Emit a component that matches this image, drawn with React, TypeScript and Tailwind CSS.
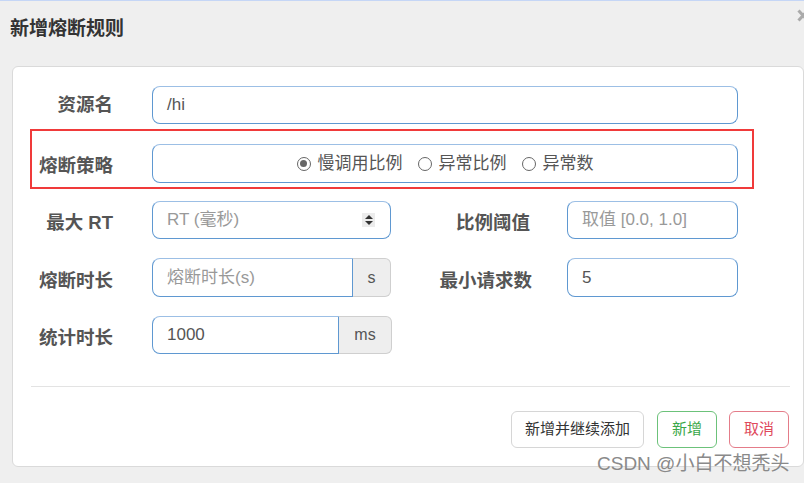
import type { ReactNode } from "react";

const inputBox =
  "flex h-full items-center border border-[#5f98d1] border-t-[#9cbfe5] bg-white px-[14px] text-[17px] text-[#555]";

function Label({ children, className = "w-[81px]" }: { children: ReactNode; className?: string }) {
  return <div className={`${className} shrink-0 text-right text-[18.5px] font-bold text-[#555]`}>{children}</div>;
}

function Radio({ checked, label }: { checked?: boolean; label: string }) {
  return (
    <label className="flex items-center gap-[7px]">
      <span className="flex h-[14px] w-[14px] items-center justify-center rounded-full border-[1.5px] border-[#666]">
        {checked ? <span className="h-[7px] w-[7px] rounded-full bg-[#666]" /> : null}
      </span>
      <span className="text-[17px] text-[#555]">{label}</span>
    </label>
  );
}

function Spinner() {
  return (
    <span className="ml-auto flex h-[14px] w-[13px] flex-col items-center justify-center gap-[2px] bg-[#ececec]">
      <svg width="8" height="4" viewBox="0 0 8 4"><path d="M0 4 L4 0 L8 4 Z" fill="#333" /></svg>
      <svg width="8" height="4" viewBox="0 0 8 4"><path d="M0 0 L8 0 L4 4 Z" fill="#333" /></svg>
    </span>
  );
}

function Addon({ children, width }: { children: ReactNode; width: string }) {
  return (
    <div className={`${width} flex h-full items-center justify-center rounded-r-[6px] border border-l-0 border-[#cfcfcf] bg-[#eee] text-[16px] text-[#555]`}>
      {children}
    </div>
  );
}

export default function App() {
  return (
    <div className="relative h-[483px] w-[804px] overflow-hidden border-t border-[#c5d6f6] bg-[#efefef] font-['Liberation_Sans','Noto_Sans_CJK_SC',sans-serif]">
      <div className="h-[65px] pl-[10px] pt-[16px]">
        <h1 className="text-[19px] font-bold leading-[24px] text-[#333]">新增熔断规则</h1>
      </div>
      {/* close icon, clipped by the window edge */}
      <svg className="absolute left-[797px] top-[8px]" width="12" height="13" viewBox="0 0 12 13">
        <path d="M1.5 1.5 L10.5 11.5 M10.5 1.5 L1.5 11.5" stroke="#aaa" strokeWidth="3" />
      </svg>

      <div className="ml-[12px] w-[792px] rounded-[6px] border border-[#dadada] bg-white pb-[18px] pl-[17px] pt-[19px]">
        {/* 资源名 */}
        <div className="flex h-[38px] w-[724px] items-center px-[2px]">
          <Label>资源名</Label>
          <div className={`${inputBox} ml-[39px] w-[586px] rounded-[8px]`}>/hi</div>
        </div>

        {/* 熔断策略 */}
        <div className="mt-[5px] w-[724px] border-2 border-[#f03a3a] pb-[4px] pt-[13px]">
          <div className="flex h-[39px] items-center">
            <Label className="w-[81px] translate-y-[2px]">熔断策略</Label>
            <div className={`${inputBox} ml-[39px] w-[586px] justify-center gap-[15px] rounded-[8px]`}>
              <Radio checked label="慢调用比例" />
              <Radio label="异常比例" />
              <Radio label="异常数" />
            </div>
          </div>
        </div>

        {/* 最大 RT / 比例阈值 */}
        <div className="mt-[12px] flex h-[38px] w-[724px] items-center px-[2px]">
          <Label className="w-[81px] translate-y-[3px]">最大 RT</Label>
          <div className={`${inputBox} ml-[39px] w-[239px] rounded-[8px] pr-[15px]`}>
            <span className="text-[#999]">RT (毫秒)</span>
            <Spinner />
          </div>
          <Label className="w-[139px] translate-y-[3px]">比例阈值</Label>
          <div className={`${inputBox} ml-[37px] w-[171px] rounded-[8px] text-[#999]`}>取值 [0.0, 1.0]</div>
        </div>

        {/* 熔断时长 / 最小请求数 */}
        <div className="mt-[19px] flex h-[39px] w-[724px] items-center px-[2px]">
          <Label className="w-[81px] translate-y-[3px]">熔断时长</Label>
          <div className="ml-[39px] flex h-full w-[239px]">
            <div className={`${inputBox} w-[201px] rounded-l-[8px] text-[#999]`}>熔断时长(s)</div>
            <Addon width="w-[38px]">s</Addon>
          </div>
          <Label className="w-[141px] translate-y-[3px]">最小请求数</Label>
          <div className={`${inputBox} ml-[35px] w-[171px] rounded-[8px]`}>5</div>
        </div>

        {/* 统计时长 */}
        <div className="mt-[19px] flex h-[38px] w-[724px] items-center px-[2px]">
          <Label className="w-[81px] translate-y-[3px]">统计时长</Label>
          <div className="ml-[39px] flex h-full w-[240px]">
            <div className={`${inputBox} w-[187px] rounded-l-[8px]`}>1000</div>
            <Addon width="w-[53px]">ms</Addon>
          </div>
        </div>

        <div className="ml-[1px] mt-[32px] w-[759px] border-t border-[#e3e3e3]" />

        <div className="mt-[24px] flex w-[759px] justify-end gap-[12px]">
          <button className="h-[37px] w-[133px] rounded-[6px] border border-[#d6d6d6] bg-white text-[15px] text-[#333]">新增并继续添加</button>
          <button className="ml-[1px] h-[37px] w-[60px] rounded-[6px] border border-[#6cc27a] bg-white text-[15px] text-[#3aa84a]">新增</button>
          <button className="h-[37px] w-[60px] rounded-[6px] border border-[#e47c89] bg-white text-[15px] text-[#e0485c]">取消</button>
        </div>
      </div>

      <span className="absolute left-[597px] top-[451px] text-[19px] leading-[24px] text-[#8a8a8a]">CSDN @小白不想秃头</span>
    </div>
  );
}
